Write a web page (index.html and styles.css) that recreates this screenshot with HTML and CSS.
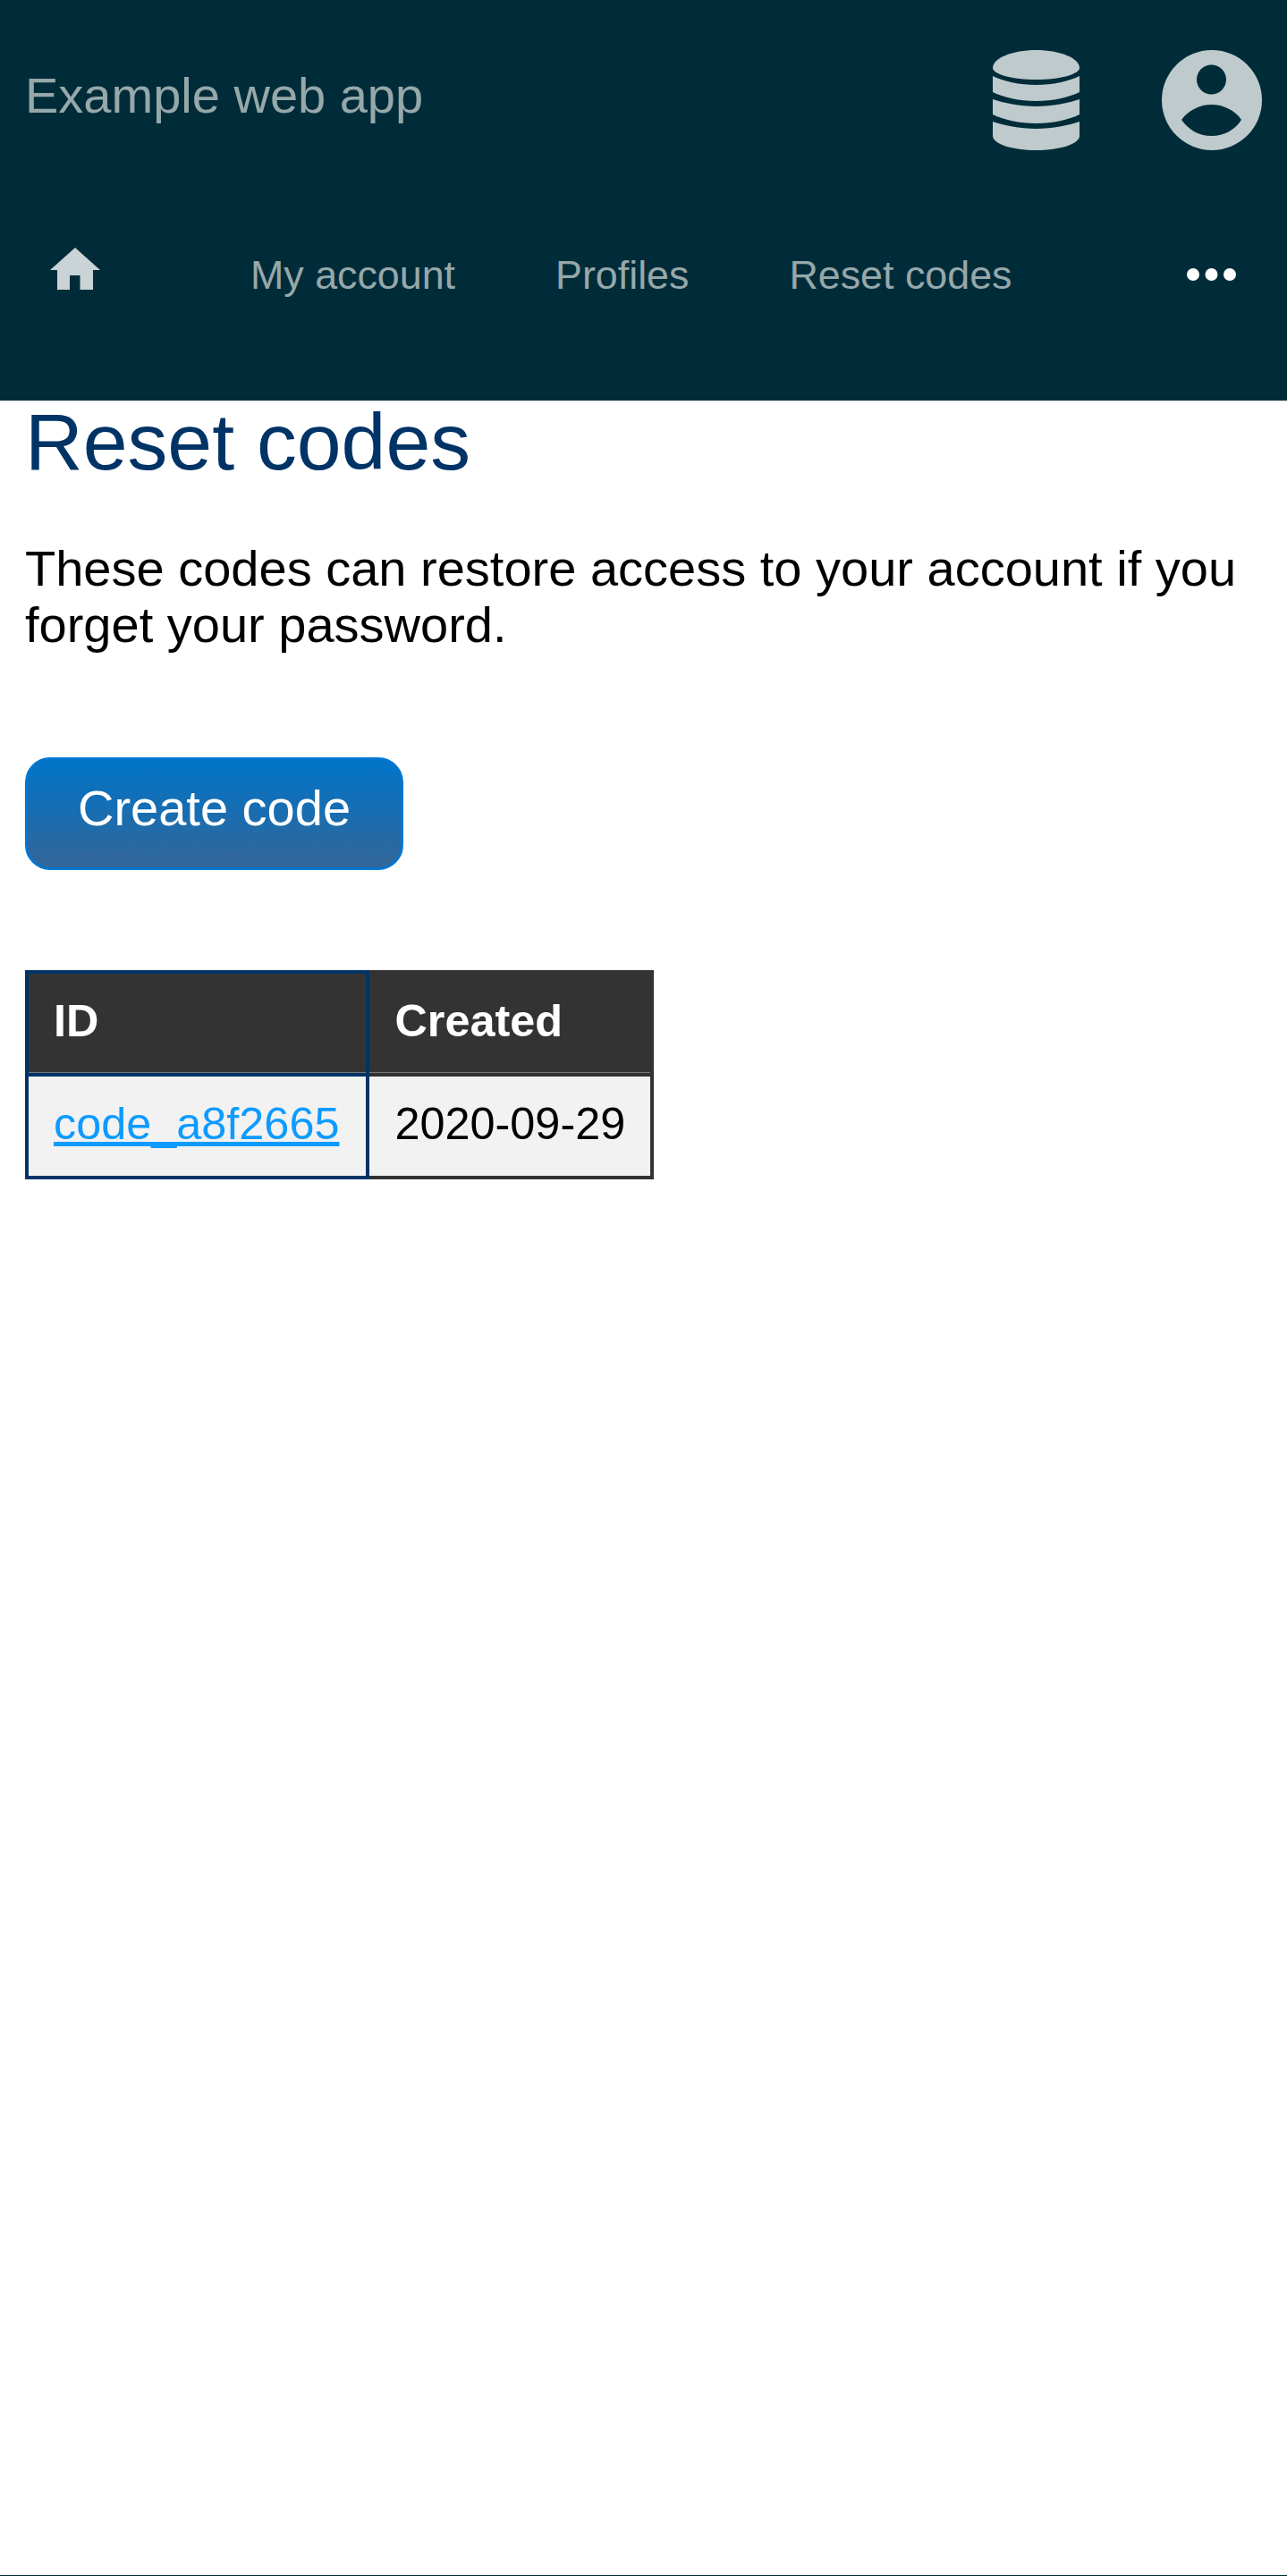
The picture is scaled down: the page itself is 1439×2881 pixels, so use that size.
FILE: index.html
```html
<!DOCTYPE html>
<html lang="en">
<head>
<meta charset="UTF-8">
<title>Reset codes</title>
<link rel="stylesheet" href="styles.css">
</head>
<body>

<header class="header">
    <div class="top">
        <a class="brand" href="#">Example web app</a>
        <div class="top-icons">
            <a href="#" aria-label="Database">
                <svg class="icon-db" viewBox="0 0 97 112"><path d="M0 20C0 9 22 0 48.5 0S97 9 97 20C97 27 75 33 48.5 33S0 27 0 20Z"/><path d="M0 29C12 35 30 39 48.5 39S85 35 97 29V47C85 53 67 57 48.5 57S12 53 0 47Z"/><path d="M0 55C12 59 30 63 48.5 63S85 59 97 55V72C85 78 67 82 48.5 82S12 78 0 72Z"/><path d="M0 80C12 84 30 88 48.5 88S85 84 97 80V96C97 105 75 112 48.5 112S0 105 0 96Z"/></svg>
            </a>
            <a href="#" aria-label="Account">
                <svg class="icon-user" viewBox="0 0 112 112"><path fill-rule="evenodd" d="M56 0A56 56 0 1 1 56 112A56 56 0 1 1 56 0ZM55.500 16.500A16.500 16.500 0 1 0 55.500 49.500A16.500 16.500 0 1 0 55.500 16.500ZM22 78C30 67 43 61 55.500 61S82 67 89 78C82 89 70 96 55.500 96S30 89 22 78Z"/></svg>
            </a>
        </div>
    </div>
    <nav class="nav">
        <a class="nav-home" href="#" aria-label="Home">
            <svg class="icon-home" viewBox="0 0 56 47"><path d="M28 0L56 25H48V47H33.500V31H22V47H8V25H0Z"/></svg>
        </a>
        <a href="#">My account</a>
        <a href="#">Profiles</a>
        <a href="#">Reset codes</a>
        <a class="nav-more" href="#" aria-label="More">
            <svg class="icon-more" viewBox="0 0 55 14"><circle cx="7" cy="7" r="7"/><circle cx="27.500" cy="7" r="7"/><circle cx="48" cy="7" r="7"/></svg>
        </a>
    </nav>
</header>

<main class="content">
    <h1>Reset codes</h1>
    <p>These codes can restore access to your account if you forget your password.</p>
    <button class="btn">Create code</button>
    <table class="codes">
        <tr>
            <th>ID</th>
            <th>Created</th>
        </tr>
        <tr>
            <td><a href="#">code_a8f2665</a></td>
            <td>2020-09-29</td>
        </tr>
    </table>
</main>

<footer class="footer"></footer>

</body>
</html>
```

FILE: styles.css
```css
* { box-sizing: border-box; }
body { margin: 0; min-height: 100vh; display: flex; flex-direction: column; font-family: "Liberation Sans", Arial, sans-serif; font-size: 56px; background: white; color: black; }
a { text-decoration: none; }

.header { background: #002c39; height: 448px; }
.top { display: flex; justify-content: space-between; align-items: center; padding: 56px 28px 0 28px; height: 168px; }
.brand { color: #96a8aa; font-size: 56px; line-height: 64px; margin-top: -10px; }
.top-icons { display: flex; gap: 92px; align-items: center; }
.top-icons a { display: flex; }
.icon-db { width: 97px; height: 112px; fill: #bfcacc; }
.icon-user { width: 112px; height: 112px; fill: #bfcacc; }

.nav { display: flex; align-items: center; height: 56px; margin-top: 111px; }
.nav a { color: #96a8aa; font-size: 44.8px; line-height: 56px; padding: 0 56px; display: flex; }
.nav a.nav-home { width: 224px; padding: 0 0 0 56px; }
.nav a.nav-more { margin-left: auto; padding: 0 57px 0 0; }
.icon-home { width: 56px; height: 47px; fill: #cad3d6; margin-bottom: 13px; }
.icon-more { width: 55px; height: 14px; fill: white; }

.content { padding: 0 28px; }
h1 { margin: -6px 0 0 0; color: #003366; font-size: 89.6px; font-weight: normal; line-height: 104px; }
p { margin: 58px 0 0 0; line-height: 63px; }

.btn { display: block; margin-top: 117px; width: 423px; height: 126px; padding: 0 0 14px 0; font-family: inherit; font-size: 56px; color: white; border: 3px solid #0277d2; border-radius: 28px; background: linear-gradient(#0074c8, #336699); }

.codes { margin-top: 112px; border-collapse: collapse; font-size: 50.4px; }
.codes th, .codes td { padding: 24px 28px 29px 28px; line-height: 58px; text-align: left; border: 4px solid #333; }
.codes tr > :first-child { padding-right: 30px; border-color: #003366; }
.codes th { background: #333; color: white; box-shadow: inset 0 -1px 0 #777; }
.codes td { background: #f2f2f2; }
.codes a { color: #0d9bff; text-decoration: underline; }

.footer { margin-top: auto; height: 1px; background: #002c39; }
```
